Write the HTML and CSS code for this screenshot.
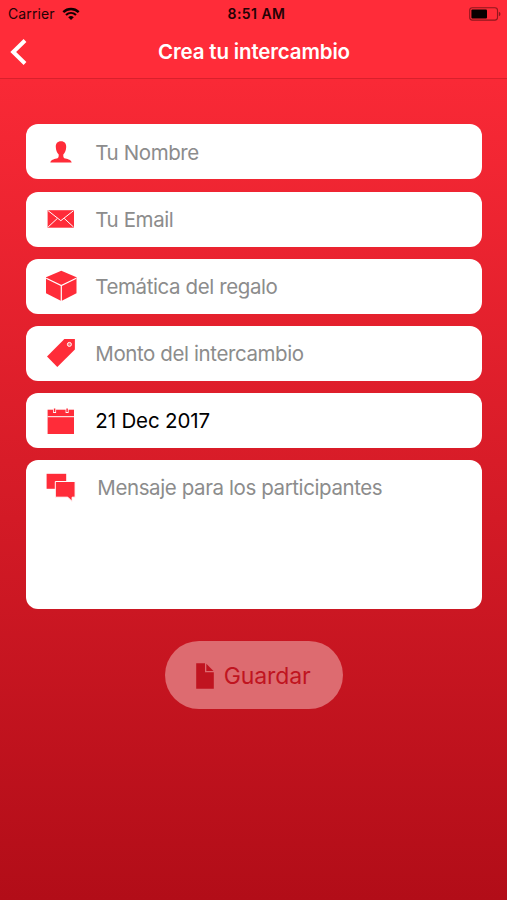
FILE: index.html
```html
<!DOCTYPE html>
<html lang="es">
<head>
<meta charset="utf-8">
<title>Crea tu intercambio</title>
<link rel="stylesheet" href="styles.css">
</head>
<body>
<div class="screen">
  <header class="top">
    <div class="status">
      <div class="carrier"><span class="carrier-name">Carrier</span>
        <svg class="wifi" width="18" height="14" viewBox="0 0 18 14"><path d="M1.3 5.1C5.7.9 12.3.9 16.7 5.1" fill="none" stroke="currentColor" stroke-width="2.4"/><path d="M4 8C6.9 5.3 11.1 5.3 14 8" fill="none" stroke="currentColor" stroke-width="2.2"/><path d="M6.2 10.2Q9 7.8 11.8 10.2L9 13z" fill="currentColor"/></svg>
      </div>
      <div class="clock">8:51 AM</div>
      <svg class="battery" width="32" height="14" viewBox="0 0 32 14"><rect x=".7" y=".7" width="27.8" height="12.4" rx="2.6" fill="none" stroke="#8f171d" stroke-width="1.1"/><rect x="2.4" y="2.5" width="15.6" height="9" rx="1" fill="#080000"/><path d="M29.8 4.7q1.7.5 1.7 2.3t-1.7 2.3z" fill="#8f171d"/></svg>
    </div>
    <div class="nav">
      <svg class="back" width="18" height="26" viewBox="0 0 18 26"><path d="M15 1.5 3.2 13 15 24.5" fill="none" stroke="#fff" stroke-width="4"/></svg>
      <h1 class="title">Crea tu intercambio</h1>
    </div>
  </header>
  <main class="form">
    <div class="field">
      <svg class="icon" width="34" height="34" viewBox="0 0 34 34"><path d="M17 6.200c-3.600 0-5.400 2.200-5.200 5.800.1 3.200 1.100 5.800 2.900 7.400 0 2.800-.1 3.300-2.200 4.200-3 .9-5.400 1.200-6.200 4h21.400c-.8-2.800-3.200-3.100-6.200-4-2.100-.9-2.200-1.400-2.200-4.200 1.800-1.600 2.800-4.200 2.900-7.400.2-3.600-1.600-5.800-5.200-5.800z" fill="currentColor"/></svg>
      <span class="label">Tu Nombre</span>
    </div>
    <div class="field">
      <svg class="icon" width="34" height="34" viewBox="0 0 34 34"><path d="M3.600 8.200H30v17.500H3.600z" fill="currentColor"/><path d="m4.100 8.700 12.700 10 12.700-10M4.100 25l9.300-8.600M29.500 25l-9.300-8.600" fill="none" stroke="#fff" stroke-width="1"/></svg>
      <span class="label">Tu Email</span>
    </div>
    <div class="field">
      <svg class="icon" width="34" height="34" viewBox="0 0 34 34"><path d="m17.300 1.800 15.200 6.400v16L17.300 32 2 24.200v-16z" fill="currentColor"/><path d="M2.200 9.200 17.300 16.500 32.300 9.200M17.300 16.500V32" fill="none" stroke="#fff" stroke-width="1.200"/></svg>
      <span class="label">Temática del regalo</span>
    </div>
    <div class="field">
      <svg class="icon" width="34" height="34" viewBox="0 0 34 34"><path d="M20.400 3h10.500v10.600L13.300 31 3 20.600z" fill="currentColor"/><circle cx="25.400" cy="8.400" r="2" fill="#f77" stroke="#fff" stroke-width="1"/></svg>
      <span class="label">Monto del intercambio</span>
    </div>
    <div class="field">
      <svg class="icon" width="34" height="34" viewBox="0 0 34 34"><path d="M3.600 5.700H30V30H3.600z" fill="currentColor"/><path d="M3.600 12.700H30" stroke="#fff" stroke-width="1"/><path d="M10.600 4.500V9M23.100 4.500V9" stroke="#fff" stroke-width="3"/><path d="M10.600 4.500V8M23.100 4.500V8" stroke="currentColor" stroke-width="1.500"/></svg>
      <span class="label date">21 Dec 2017</span>
    </div>
    <div class="field message">
      <svg class="icon" width="34" height="34" viewBox="0 0 34 34"><path d="M2.600 3.800h19.600v15H2.600z" fill="currentColor"/><path d="M11.300 11.500h19.800v15.700h-3v4.300l-4.300-4.300H11.300z" fill="currentColor" stroke="#fff" stroke-width="1"/></svg>
      <span class="label note">Mensaje para los participantes</span>
    </div>
    <button class="save" type="button">
      <svg class="doc" width="18" height="26" viewBox="0 0 18 26"><path d="M.2.300h8.800v9h8.800v16.400H.2z" fill="currentColor"/><path d="M10.300.800 17.500 8h-7.200z" fill="currentColor"/></svg>
      <span class="save-text">Guardar</span>
    </button>
  </main>
</div>
</body>
</html>
```
FILE: styles.css
```css
* { box-sizing: border-box; }
body { margin: 0; font-family: Inter, "Liberation Sans", sans-serif; }
.screen {
  width: 507px;
  height: 900px;
  overflow: hidden;
  background: linear-gradient(#ff2c39 0, #f92936 80px, #b20d18 900px);
}
.top { height: 79px; background: #ff2c39; border-bottom: 1px solid #d9202c; }
.status {
  height: 27px;
  display: grid;
  grid-template-columns: 1fr auto 1fr;
  align-items: center;
  padding: 0 6px 0 8px;
  color: #240205;
  font-size: 14px;
  line-height: 27px;
}
.carrier { display: flex; align-items: center; gap: 7px; }
.carrier-name { letter-spacing: .1px; }
.wifi { color: #100001; }
.clock { font-weight: 600; font-size: 14px; letter-spacing: .45px; padding: 1px 0 0 4px; line-height: 26px; }
.battery { justify-self: end; }
.nav {
  height: 51px;
  display: grid;
  grid-template-columns: 38px 1fr 38px;
  align-items: center;
}
.back { margin: 0 0 2px 9.500px; }
.title {
  margin: 0 0 2px 1px;
  color: #fff;
  text-align: center;
  font-size: 20.500px;
  font-weight: 600;
  letter-spacing: -.15px;
  white-space: nowrap;
}
.form {
  display: flex;
  flex-direction: column;
  align-items: stretch;
  gap: 12.200px;
  padding: 45.400px 25.500px 0 26.300px;
}
.field {
  height: 55px;
  display: flex;
  align-items: center;
  gap: 17.300px;
  padding-left: 17.700px;
  border-radius: 12px;
  background: #fff;
  color: #ff2c39;
}
.icon { flex: none; }
.label {
  padding-top: 1.300px;
  color: #8c8c8c;
  font-size: 20.500px;
  line-height: 28px;
  letter-spacing: -.4px;
  white-space: nowrap;
}
.date { color: #000; letter-spacing: -.15px; }
.message { height: 149px; align-items: flex-start; padding-top: 10px; gap: 19.300px; }
.note { padding-top: 4px; }
.save {
  width: 178px;
  height: 68px;
  margin-top: 19.700px;
  align-self: center;
  display: flex;
  align-items: center;
  justify-content: center;
  gap: 9.500px;
  padding: 1px 1px 0 0;
  border: 0;
  border-radius: 34px;
  background: #dd6b70;
  color: #c01420;
  font-family: inherit;
  font-size: 23px;
}
.save-text { padding-top: 1px; letter-spacing: -.1px; }
```
